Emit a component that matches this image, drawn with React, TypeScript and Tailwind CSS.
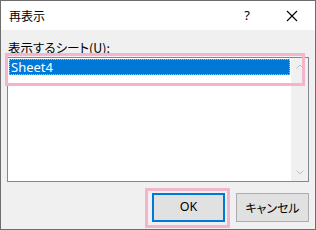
import React from "react";

const jp = { fontFamily: '"Noto Sans CJK JP", "Noto Sans", sans-serif' };

export default function App() {
  return (
    <div
      className="relative w-[316px] h-[230px] border border-[#6d6d6d] flex flex-col text-[#000] overflow-hidden [font-feature-settings:'palt']"
      style={jp}
    >
      <div className="h-[29px] bg-white flex items-center pl-[8px] shrink-0">
        <span className="text-[12px] leading-none">再表示</span>
        <span className="ml-auto text-[13px] leading-none mr-[36px]" style={{ fontFamily: '"Noto Sans", sans-serif' }}>?</span>
        <svg width="12" height="12" viewBox="0 0 12 12" className="mr-[17px]">
          <path d="M1 1 L11 11 M11 1 L1 11" stroke="#000" strokeWidth="1.1" />
        </svg>
      </div>
      <div className="flex-1 bg-[#f0f0f0] flex flex-col pl-[6px] pr-[6px] pt-[8px]">
        <div className="h-[19px] text-[12.5px] leading-[19px] pl-[1px]">
          表示するシート(<span className="underline">U</span>):
        </div>
        <div className="h-[125px] border border-[#828790] bg-white flex">
          <div className="flex-1 pt-[1px] pl-[1px] pr-[1px]">
            <div
              className="h-[16px] bg-[#0078d7] border border-dotted border-[#9ec5ec] text-white text-[13px] leading-[14px] pl-[1px]"
              style={{ fontFamily: '"Noto Sans", sans-serif' }}
            >
              Sheet4
            </div>
          </div>
          <div className="w-[17px] bg-[#f0f0f0] flex flex-col justify-between items-center py-[6px]">
            <svg width="8" height="5" viewBox="0 0 8 5">
              <path d="M0.5 4.5 L4 1 L7.5 4.5" stroke="#c0c0c0" strokeWidth="1" fill="none" />
            </svg>
            <svg width="8" height="5" viewBox="0 0 8 5">
              <path d="M0.5 0.5 L4 4 L7.5 0.5" stroke="#c0c0c0" strokeWidth="1" fill="none" />
            </svg>
          </div>
        </div>
        <div className="mt-[11px] flex justify-end gap-[11px] pr-[0px]">
          <div className="w-[73px] h-[29px] border-2 border-[#0078d7] bg-[#e1e1e1] flex items-center justify-center text-[12.5px]" style={{ fontFamily: '"Noto Sans", sans-serif' }}>
            OK
          </div>
          <div className="w-[73px] h-[29px] border border-[#adadad] bg-[#e1e1e1] flex items-center justify-center text-[12px]">
            キャンセル
          </div>
        </div>
      </div>
      <div className="absolute left-[4px] top-[52px] w-[300px] h-[33px] border-[3px] border-[#f3b5cb]" />
      <div className="absolute left-[144px] top-[187px] w-[85px] h-[40px] border-[3px] border-[#f3b5cb]" />
    </div>
  );
}
